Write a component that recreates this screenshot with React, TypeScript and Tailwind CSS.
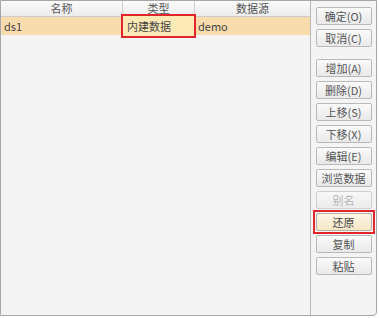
import React from "react";

const font = { fontFamily: '"Noto Sans CJK SC", "Noto Sans", sans-serif' };

function Btn({ label, disabled, highlight }: { label: string; disabled?: boolean; highlight?: boolean }) {
  const btn = (
    <div
      className={
        "w-[56px] h-[18px] flex items-center justify-center border rounded-[2px] text-[11px] leading-none " +
        (highlight
          ? "border-[#b5b0a5] bg-gradient-to-b from-[#fdf6e6] to-[#f6e6c6] text-[#444]"
          : disabled
          ? "border-[#cfcfcf] bg-gradient-to-b from-[#f7f7f7] to-[#ececec] text-[#b4b4b4]"
          : "border-[#b9b9b9] bg-gradient-to-b from-[#fafafa] to-[#e9e9e9] text-[#555]")
      }
    >
      {label}
    </div>
  );
  if (highlight) {
    return <div className="border-2 border-[#e0252b] p-[1px] -my-[3px]">{btn}</div>;
  }
  return btn;
}

export default function App() {
  return (
    <div className="w-[379px] h-[318px] bg-white" style={font}>
      <div className="w-[377px] h-[316px] border border-[#a7a7a7] rounded-br-[4px] flex bg-[#f3f4f3]">
        <div className="w-[310px] flex flex-col border-r border-[#b7b7b7]">
          <div className="h-[16px] grid grid-cols-[122px_72px_1fr] bg-gradient-to-b from-[#fbfbfb] to-[#ececec] border-b border-[#cdcdcd] text-[11px] text-[#555] leading-none">
            <div className="flex items-center justify-center border-r border-[#cfcfcf]">名称</div>
            <div className="flex items-center justify-center border-r border-[#cfcfcf]">类型</div>
            <div className="flex items-center justify-center">数据源</div>
          </div>
          <div className="h-[18px] grid grid-cols-[122px_72px_1fr] bg-[#f9dcae] text-[11px] text-[#444] leading-none">
            <div className="flex items-center pl-[3px]">ds1</div>
            <div className="relative flex items-center pl-[4px]">
              <div className="absolute -left-[2px] -right-[1px] -top-[3px] -bottom-[3px] border-2 border-[#e0252b] bg-[#fce9b5]" />
              <span className="relative">内建数据</span>
            </div>
            <div className="flex items-center pl-[3px]">demo</div>
          </div>
          <div className="flex-1" />
        </div>
        <div className="flex-1 flex flex-col items-center pt-[6px] gap-[4px]">
          <Btn label="确定(O)" />
          <Btn label="取消(C)" />
          <div className="h-[4px]" />
          <Btn label="增加(A)" />
          <Btn label="删除(D)" />
          <Btn label="上移(S)" />
          <Btn label="下移(X)" />
          <Btn label="编辑(E)" />
          <Btn label="浏览数据" />
          <Btn label="别名" disabled />
          <Btn label="还原" highlight />
          <Btn label="复制" />
          <Btn label="粘贴" />
        </div>
      </div>
    </div>
  );
}
